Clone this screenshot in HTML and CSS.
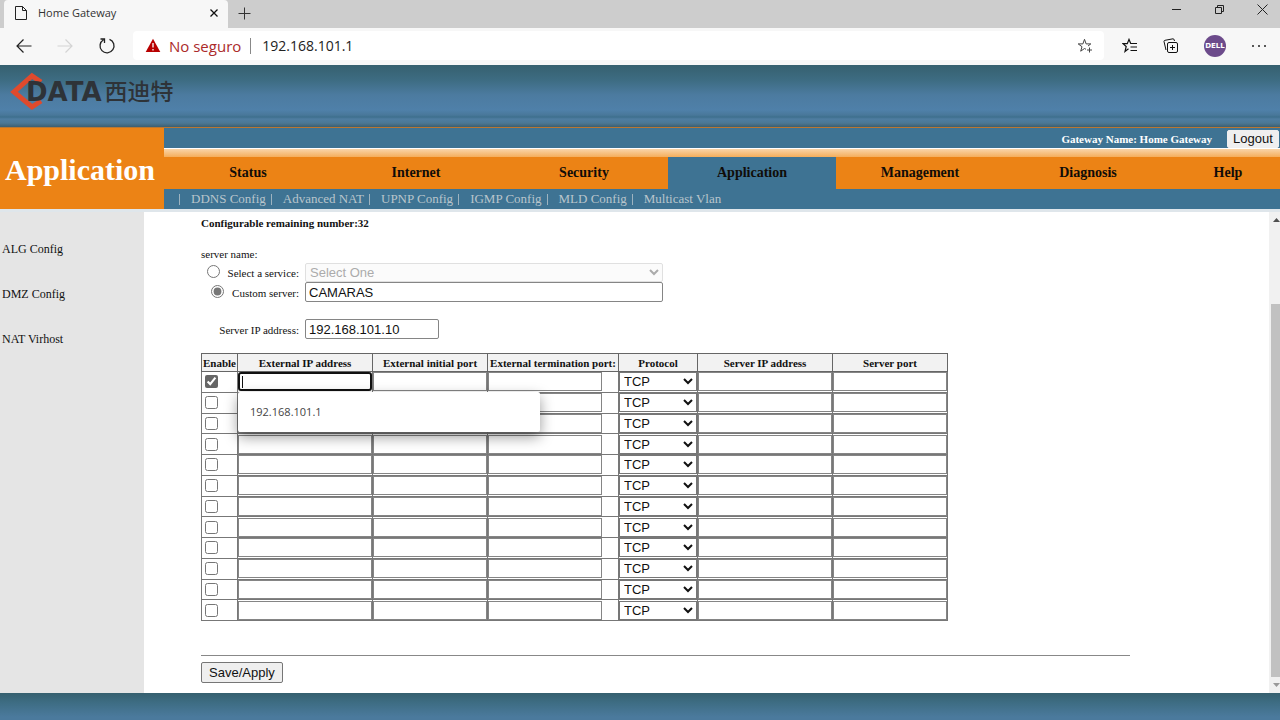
FILE: index.html
```html
<!DOCTYPE html>
<html lang="en">
<head>
<meta charset="utf-8">
<title>Home Gateway</title>
<link rel="stylesheet" href="styles.css">
</head>
<body>
<header class="browser">
  <div class="tabbar">
    <div class="tab">
      <svg width="14" height="16" viewBox="0 0 14 16" fill="none" stroke="#222"><path d="M1.5 1.5h7l4 4v9h-11zM8.500 1.500v4h4"/></svg>
      <span class="tab-title">Home Gateway</span>
      <button class="icon" aria-label="Close tab"><svg width="10" height="10" viewBox="0 0 10 10" stroke="#111" stroke-width="1.300"><path d="M1.500 1.500l7 7M8.500 1.500l-7 7"/></svg></button>
    </div>
    <button class="icon new-tab" aria-label="New tab"><svg width="13" height="13" viewBox="0 0 13 13" stroke="#333"><path d="M6.500 .5v12M.5 6.500h12"/></svg></button>
    <div class="window-buttons">
      <button class="icon" aria-label="Minimize"><svg width="11" height="11" viewBox="0 0 11 11" stroke="#222"><path d="M1 5.500h9"/></svg></button>
      <button class="icon" aria-label="Restore"><svg width="11" height="11" viewBox="0 0 11 11" fill="none" stroke="#222"><path d="M1.500 3.500h6v6h-6zM3.500 3.500v-2h6v6h-2"/></svg></button>
      <button class="icon" aria-label="Close"><svg width="11" height="11" viewBox="0 0 11 11" stroke="#222"><path d="M.5 .5l10 10M10.500 .5l-10 10"/></svg></button>
    </div>
  </div>
  <div class="toolbar">
    <div class="nav-buttons">
      <button class="icon" aria-label="Back"><svg width="16" height="16" viewBox="0 0 16 16" fill="none" stroke="#222" stroke-width="1.200"><path d="M15.500 8H1M7.500 1.500L1 8l6.500 6.500"/></svg></button>
      <button class="icon" aria-label="Forward" disabled><svg width="16" height="16" viewBox="0 0 16 16" fill="none" stroke="#d4d4d4" stroke-width="1.200"><path d="M.5 8H15M8.500 1.500L15 8l-6.500 6.500"/></svg></button>
      <button class="icon" aria-label="Reload"><svg width="18" height="18" viewBox="0 0 18 18" fill="none" stroke="#222" stroke-width="1.300"><path d="M11.500 2.300A7 7 0 1 1 5.500 2.800M2.500 2h4v4"/></svg></button>
    </div>
    <div class="address">
      <svg width="16" height="15" viewBox="0 0 16 15"><path d="M8 .8L15.300 14H.7z" fill="#b80000"/><path d="M8 5v4.500M8 11v1.500" stroke="#fff" stroke-width="1.300"/></svg>
      <span class="insecure">No seguro</span>
      <input class="url" aria-label="Address" value="192.168.101.1">
      <button class="icon" aria-label="Add favorite"><svg width="16" height="16" viewBox="0 0 16 16" fill="none" stroke="#444"><path d="M9 11.300L7.500 10.500 3.700 13.200 5 8.700 1.200 5.900h4.700L7.500 1.300l1.600 4.600h4.700L11 8M12.500 9.500v5M10 12h5"/></svg></button>
    </div>
    <button class="icon" aria-label="Favorites"><svg width="16" height="16" viewBox="0 0 16 16" fill="none" stroke="#111" stroke-width="1.200"><path d="M6.500 10.800L3 13.500l1.200-5L1 5.700h4.300l1.700-4.300L8.700 5.500H15M8.500 9H15M8.500 12.500H15"/></svg></button>
    <button class="icon" aria-label="Collections"><svg width="16" height="16" viewBox="0 0 16 16" fill="none" stroke="#111"><rect x="4.500" y="4.500" width="10" height="10" rx="1.500"/><path d="M9.500 7v5M7 9.500h5M3 12L1 3.500q0-1 1-1.200L10 .8q1 0 1.200 1.200l.3 1"/></svg></button>
    <button class="icon profile" aria-label="Profile">DELL</button>
    <button class="icon" aria-label="Settings and more"><svg width="16" height="4" viewBox="0 0 16 4" fill="#222"><circle cx="2" cy="2" r="1"/><circle cx="8" cy="2" r="1"/><circle cx="14" cy="2" r="1"/></svg></button>
  </div>
</header>

<div class="banner">
  <div class="logo">
    <svg class="logo-mark" width="34" height="40" viewBox="0 0 34 40" fill="none" stroke="#df4a2d" stroke-width="5"><path d="M31 10L22 4 4 20l18 15 9-6"/></svg>
    <span class="logo-latin">DATA</span><span class="logo-cjk">西迪特</span>
  </div>
</div>

<div class="head">
  <h1 class="section-title">Application</h1>
  <div class="head-main">
    <div class="info"><span>Gateway Name: Home Gateway</span><button class="button logout">Logout</button></div>
    <div class="shine"></div>
    <nav class="menu">
      <a href="#">Status</a><a href="#">Internet</a><a href="#">Security</a><a href="#" class="active">Application</a><a href="#">Management</a><a href="#">Diagnosis</a><a href="#" class="last">Help</a>
    </nav>
    <nav class="submenu">
      <a href="#">DDNS Config</a><a href="#">Advanced NAT</a><a href="#">UPNP Config</a><a href="#">IGMP Config</a><a href="#">MLD Config</a><a href="#">Multicast Vlan</a>
    </nav>
  </div>
</div>

<div class="body">
  <nav class="side"><a href="#">ALG Config</a><a href="#">DMZ Config</a><a href="#">NAT Virhost</a></nav>
  <main class="content">
    <p class="remaining">Configurable remaining number:32</p>
    <p class="group">server name:</p>
    <div class="field">
      <div class="label"><input type="radio" name="kind" id="kind-service"><label for="kind-service">Select a service:</label></div>
      <select class="wide" aria-label="Service" disabled><option>Select One</option></select>
    </div>
    <div class="field">
      <div class="label"><input type="radio" name="kind" id="kind-custom" checked><label for="kind-custom">Custom server:</label></div>
      <input class="text wide" aria-label="Custom server name" value="CAMARAS">
    </div>
    <div class="field spaced">
      <div class="label"><label for="server-ip">Server IP address:</label></div>
      <input class="text" id="server-ip" value="192.168.101.10">
    </div>
    <table class="ports">
      <colgroup><col class="c-enable"><col class="c-ip"><col class="c-port"><col class="c-end"><col class="c-proto"><col class="c-ip"><col class="c-port"></colgroup>
      <thead><tr><th>Enable</th><th>External IP address</th><th>External initial port</th><th>External termination port:</th><th>Protocol</th><th>Server IP address</th><th>Server port</th></tr></thead>
      <tbody id="rows"></tbody>
    </table>
    <hr>
    <button class="button save">Save/Apply</button>
  </main>
  <div class="scrollbar">
    <svg width="11" height="16" viewBox="0 0 11 16"><path d="M4 10l3.500-4 3.500 4z" fill="#505050"/></svg>
    <div class="track"><div class="thumb"></div></div>
    <svg width="11" height="16" viewBox="0 0 11 16"><path d="M4 6l3.500 4L11 6z" fill="#999"/></svg>
  </div>
</div>
<footer class="foot"></footer>
<script src="rows.js"></script>
</body>
</html>
```

FILE: styles.css
```css
* { box-sizing: border-box; }
body { margin: 0; height: 100vh; display: flex; flex-direction: column; overflow: hidden; background: #fff; font: 12px/14px "Liberation Serif", serif; color: #111; }
a { color: inherit; text-decoration: none; }
p, h1 { margin: 0; }
svg { display: block; flex: none; }
button { font: inherit; }
.icon { border: 0; background: none; padding: 0; flex: none; }

.browser { flex: none; font-family: "Open Sans", sans-serif; }
.tabbar { display: flex; align-items: center; height: 28px; background: #cdcdcd; padding: 0 12px 0 4px; }
.tab { display: flex; align-items: center; gap: 10px; width: 224px; height: 28px; padding: 0 9px 2px 10px; background: #f7f7f7; border-radius: 4px 4px 0 0; color: #333; }
.tab-title { flex: 1; font-size: 11px; }
.new-tab { margin-left: 10px; padding-bottom: 2px; }
.window-buttons { margin-left: auto; display: flex; gap: 32px; padding-bottom: 10px; }
.toolbar { display: flex; align-items: center; gap: 25px; height: 37px; padding: 0 13px 2px 16px; background: #f7f7f7; }
.nav-buttons { display: flex; align-items: center; gap: 25px; margin-right: -8px; }
.address { flex: 1; display: flex; align-items: center; height: 29px; margin-right: -7px; padding: 0 11px 0 12px; background: #fff; border-radius: 4px; }
.insecure { margin-left: 8px; padding-right: 9px; border-right: 1px solid #888; color: #ab2a2a; font-size: 15px; line-height: 16px; }
.url { flex: 1; margin-left: 11px; padding: 0; border: 0; outline: 0; color: #222; font: 14px/20px "Open Sans", sans-serif; }
.profile { width: 22px; height: 22px; border-radius: 50%; background: #6c4b8b; color: #fff; font: bold 7px/22px "DejaVu Sans", sans-serif; text-align: center; }

.banner { flex: none; height: 63px; padding: 7px 0 0 10px; border-bottom: 1px solid #b97732; background: linear-gradient(#36606f 0, #3d6c82 15px, #4c7ba0 30px, #4f80a9 45px, #49789a 50px, #3e6f8d 52px, #4e7da1 54px, #4b7895 58px, #3c5f70 62px); }
.logo { display: flex; align-items: center; height: 40px; color: #2e3338; }
.logo-mark { margin-right: -18px; }
.logo-latin { font: bold 26px/40px "DejaVu Sans", sans-serif; }
.logo-cjk { margin-left: 3px; padding-bottom: 4px; font: 500 23px/36px "Noto Sans CJK SC", sans-serif; }

.head { flex: none; display: flex; }
.section-title { flex: none; display: flex; align-items: center; justify-content: center; width: 164px; padding: 2px 4px 0 0; background: #ec8315; color: #fff; font-size: 30px; line-height: 34px; }
.head-main { flex: 1; min-width: 0; }
.info { display: flex; align-items: center; justify-content: flex-end; gap: 15px; height: 20px; padding: 1px 1px 0 0; background: #3e7393; color: #fff; font-size: 11px; font-weight: bold; }
.shine { height: 9px; border-top: 1px solid #fff; background: linear-gradient(#f9d5a9, #f5ae5b); }
.button { border: 1px solid #767676; border-radius: 2px; background: #efefef; color: #111; font: 13px/16px "Liberation Sans", sans-serif; padding: 0; }
.logout { width: 52px; height: 18px; border-color: #efefef; }
.menu { display: flex; height: 32px; background: #ec8315; color: #100c08; font-size: 14px; font-weight: bold; line-height: 32px; text-align: center; }
.menu a { flex: none; width: 168px; }
.menu .last { flex: 1; padding-left: 4px; }
.menu .active { background: #3e7393; }
.submenu { display: flex; height: 20px; padding-left: 15px; background: #3e7393; color: #b9c5cc; font-size: 13px; line-height: 20px; }
.submenu a { display: flex; align-items: center; padding-right: 5px; }
.submenu a::before { content: ""; width: 1px; height: 11px; margin-right: 11px; background: #9db3c0; }

.body { flex: 1; min-height: 0; display: flex; border-top: 3px solid #dfe6eb; }
.side { display: flex; flex-direction: column; width: 144px; padding: 15px 0 0 2px; background: #e5e5e5; line-height: 45px; }
.content { flex: 1; padding: 4px 139px 0 57px; font-size: 11px; }
.remaining { font-weight: bold; }
.group { margin: 17px 0 1px; }
.field { display: flex; gap: 6px; height: 20px; align-items: center; }
.spaced { margin: 17px 0 14px; }
.label { display: flex; align-items: center; justify-content: flex-end; width: 98px; padding-top: 1px; white-space: nowrap; }
.label input { width: 13px; height: 13px; margin: 0 8px 3px 0; accent-color: #767676; }
.text { width: 134px; height: 20px; padding: 1px 3px; border: 1px solid #858585; border-radius: 2px; font: 13px/16px "Liberation Sans", sans-serif; color: #111; }
.field .wide { width: 358px; }
select { font: 13px/16px "Liberation Sans", sans-serif; border: 1px solid #767676; border-radius: 0; background: #fff; color: #111; }
.field select { height: 19px; border-color: #d3d3d3; background: #fafafa; color: #888; border-radius: 2px; }

.ports { width: 746px; height: 268px; table-layout: fixed; border-collapse: collapse; border: 1px solid #222; }
.c-enable { width: 36px; }
.c-ip { width: 135px; }
.c-port { width: 115px; }
.c-end { width: 131px; }
.c-proto { width: 79px; }
.ports th { height: 18px; padding: 0; border: 1px solid #666; background: #f2f2f2; white-space: nowrap; }
.ports td { padding: 0; border: 1px solid #777; vertical-align: middle; }
.ports input, .ports select { display: block; }
.ports input[type="checkbox"] { width: 13px; height: 13px; margin: 0 0 0 3px; accent-color: #666; }
.ports .cell { width: 100%; height: 19px; padding: 1px 3px; border: 1px solid #858585; outline: 0; font: 13px/16px "Liberation Sans", sans-serif; }
.ports .end { width: 114px; }
.ports select { width: 100%; height: 19px; }
.suggest { position: relative; }
.ports .suggest .cell { border: 2px solid #111; border-radius: 3px; background: linear-gradient(#111, #111) 2px 50% / 1px 12px no-repeat #fff; }
.popup { position: absolute; z-index: 2; top: 20px; left: 0; width: 302px; padding: 13px 12px; border-radius: 2px; background: #fff; box-shadow: 0 5px 14px rgba(0, 0, 0, .4); color: #444; font: 11px/14px "Open Sans", sans-serif; }

hr { height: 1px; margin: 34px 0 6px; border: 0; background: #888; }
.save { width: 82px; height: 21px; }
.scrollbar { display: flex; flex-direction: column; width: 11px; background: #f1f1f1; }
.track { flex: 1; display: flex; flex-direction: column; justify-content: flex-end; padding-left: 2px; }
.thumb { height: 83%; background: #c1c1c1; }
.foot { flex: none; height: 27px; background: linear-gradient(#36606f, #3d6c82 9px, #4b7a9d 24px); }
```

FILE: rows.js
```js
const body = document.getElementById("rows");
const cell = (name, n, extra = "") => `<input class="cell ${extra}" aria-label="${name} ${n}">`;
for (let n = 1; n <= 12; n++) {
  const first = n === 1;
  const row = document.createElement("tr");
  row.innerHTML = `
    <td><input type="checkbox" aria-label="Enable ${n}"${first ? " checked" : ""}></td>
    <td>${first ? `<div class="suggest">${cell("External IP address", n)}<div class="popup">192.168.101.1</div></div>` : cell("External IP address", n)}</td>
    <td>${cell("External initial port", n)}</td>
    <td>${cell("External termination port", n, "end")}</td>
    <td><select aria-label="Protocol ${n}"><option>TCP</option><option>UDP</option></select></td>
    <td>${cell("Server IP address", n)}</td>
    <td>${cell("Server port", n)}</td>`;
  body.append(row);
}
```
